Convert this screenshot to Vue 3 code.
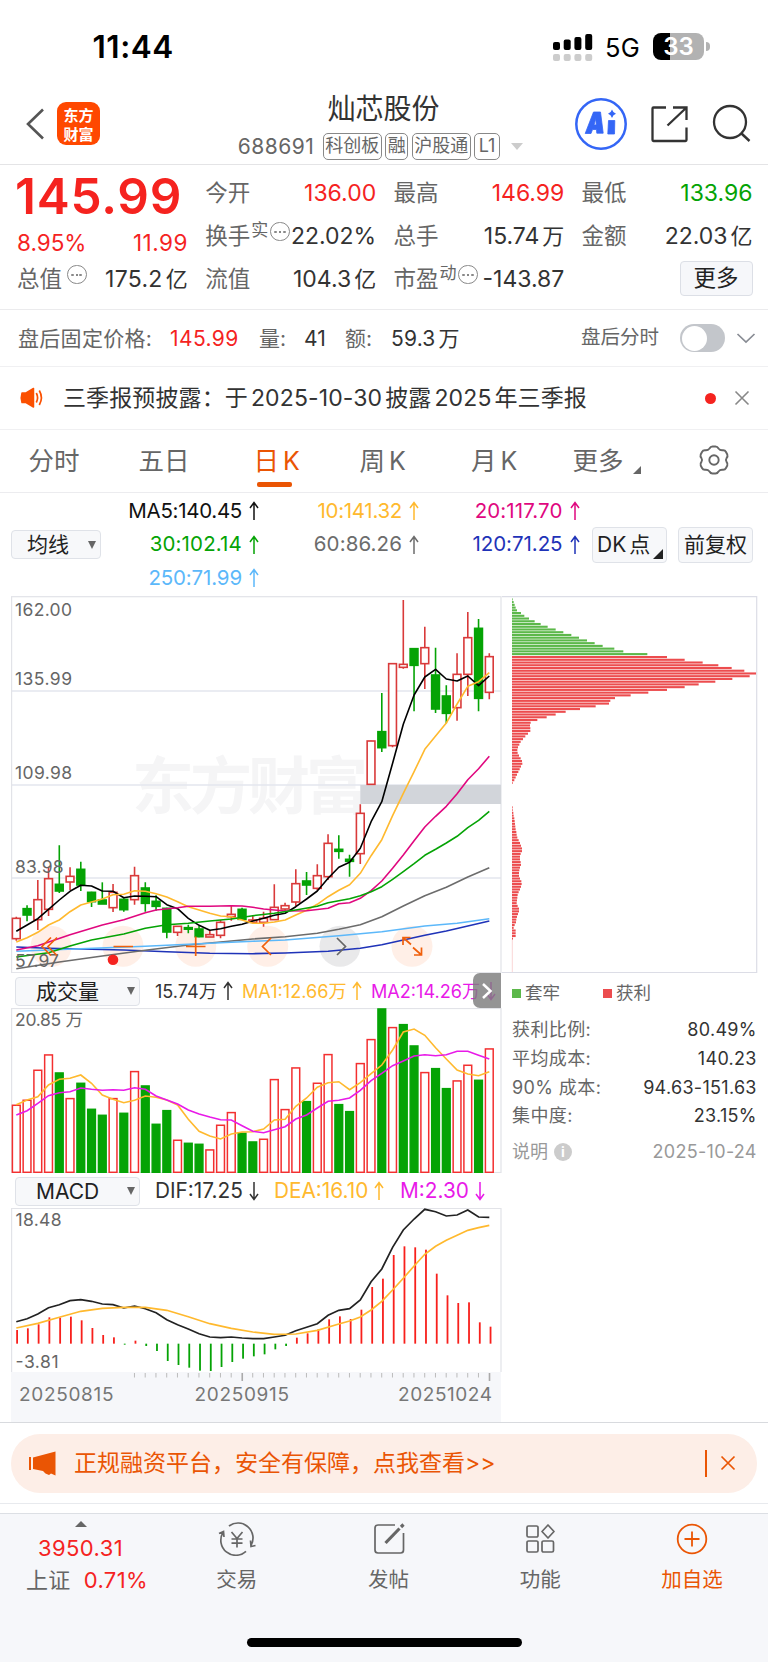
<script setup>
const step = 10.75
const cx = (i) => 16.3 + step * i

// colour, high, body top, body bottom, low (thirds of a pixel, from the top of the plot)
const candleData = [
  ['r', 980, 985, 1046, 1052], ['g', 946, 956, 975, 994], ['r', 870, 929, 989, 1020],
  ['r', 830, 866, 958, 978], ['g', 766, 883, 903, 909], ['r', 832, 859, 876, 900],
  ['g', 815, 838, 885, 903], ['g', 905, 907, 935, 951], ['g', 877, 930, 942, 942],
  ['r', 882, 907, 953, 966], ['g', 925, 928, 959, 965], ['r', 830, 857, 929, 944],
  ['g', 877, 894, 940, 965], ['g', 916, 934, 949, 962], ['g', 953, 955, 1026, 1045],
  ['r', 1008, 1009, 1027, 1038], ['g', 1004, 1013, 1017, 1030], ['g', 1008, 1017, 1040, 1042],
  ['r', 1022, 1034, 1041, 1041], ['r', 990, 997, 1036, 1045], ['r', 948, 973, 980, 992],
  ['g', 953, 958, 988, 990], ['r', 975, 990, 997, 998], ['r', 965, 985, 997, 1010],
  ['r', 883, 952, 989, 990], ['r', 938, 947, 957, 962], ['r', 838, 881, 936, 948],
  ['g', 846, 873, 885, 915], ['r', 823, 857, 895, 900], ['r', 733, 760, 860, 870],
  ['g', 736, 778, 784, 806], ['g', 794, 808, 814, 860], ['r', 643, 670, 791, 822],
  ['r', 452, 453, 583, 585], ['g', 309, 425, 473, 486], ['r', 220, 221, 467, 472],
  ['r', 30, 223, 232, 236], ['g', 176, 176, 226, 364], ['r', 110, 173, 221, 297],
  ['g', 173, 255, 357, 369], ['g', 286, 318, 370, 400], ['r', 190, 253, 353, 392],
  ['r', 66, 143, 253, 318], ['g', 87, 115, 325, 364], ['r', 190, 200, 307, 328],
]
const py = (v) => 590 + v / 3
const candles = candleData.map(([c, h, t, b, l], i) => ({
  c, x: cx(i), h: py(h), t: py(t), b: py(b), l: py(l), bh: Math.max((b - t) / 3, 1.5),
}))

const line = (pts, base) =>
  pts.map(([i, v]) => `${cx(i).toFixed(1)},${(base + v / 3).toFixed(1)}`).join(' ')
const full = (arr, base) => line(arr.map((v, i) => [i, v]), base)

const maLines = [
  { color: '#1f33b8', pts: line([[0, 1071], [3, 1075], [6, 1077], [10, 1080], [14, 1085], [18, 1090], [22, 1091], [25, 1089], [29, 1084], [32, 1075], [34, 1064], [36, 1050], [38, 1036], [40, 1023], [42, 1008], [44, 993]], 590) },
  { color: '#6c6c6c', pts: line([[0, 1136], [4, 1116], [8, 1098], [12, 1081], [16, 1065], [19, 1056], [22, 1047], [25, 1040], [28, 1030], [30, 1018], [32, 1004], [34, 980], [36, 948], [38, 917], [40, 892], [42, 861], [44, 833]], 590) },
  { color: '#5cb8fa', pts: line([[0, 1084], [6, 1076], [12, 1069], [18, 1060], [22, 1054], [25, 1050], [30, 1037], [34, 1025], [38, 1008], [41, 1000], [44, 986]], 590) },
  { color: '#000', pts: full([1024, 1005, 986, 958, 930, 904, 886, 888, 903, 904, 923, 918, 919, 920, 944, 956, 985, 1006, 1021, 1016, 1009, 1003, 993, 985, 976, 970, 950, 927, 903, 865, 832, 817, 775, 695, 635, 520, 403, 315, 261, 238, 267, 273, 258, 287, 258], 590) },
  { color: '#ffb92e', pts: full([1056, 1043, 1027, 1005, 990, 965, 945, 936, 927, 914, 913, 902, 904, 911, 921, 935, 950, 960, 970, 978, 980, 990, 1000, 1000, 996, 990, 975, 961, 943, 920, 901, 884, 850, 797, 749, 677, 610, 545, 478, 438, 399, 342, 289, 275, 248], 590) },
  { color: '#e0087f', pts: line([[0, 1080], [2, 1067], [5, 1034], [8, 1005], [10, 989], [12, 968], [13, 960], [15, 953], [16, 949], [18, 949], [20, 947], [21, 948], [22, 952], [23, 957], [25, 963], [27, 962], [29, 955], [30, 941], [31, 938], [32, 925], [33, 902], [34, 873], [35, 835], [36, 795], [37, 752], [38, 711], [39, 679], [40, 649], [41, 611], [42, 569], [43, 536], [44, 499]], 590) },
  { color: '#05a305', pts: line([[0, 1101], [3, 1088], [5, 1068], [7, 1050], [10, 1032], [12, 1015], [14, 1004], [16, 1000], [18, 993], [20, 987], [22, 977], [24, 970], [26, 960], [28, 949], [29, 938], [30, 932], [31, 926], [32, 917], [33, 905], [34, 890], [35, 868], [36, 845], [37, 821], [38, 796], [39, 778], [40, 759], [41, 739], [42, 713], [43, 691], [44, 664]], 590) },
]

const volTop = [404, 389, 299, 253, 307, 384, 338, 416, 434, 384, 428, 303, 346, 461, 420, 509, 518, 521, 538, 464, 426, 488, 514, 506, 327, 417, 292, 393, 338, 252, 402, 423, 279, 207, 115, 171, 162, 226, 306, 294, 354, 331, 284, 329, 235]
const volCol = 'rrrrgrgggrgrgggrggrrrggrrrrgrrggrrgrggrggrrgr'
const vols = volTop.map((v, i) => ({ c: volCol[i], x: cx(i), y: 970 + v / 3 }))
const volMa1 = full([404, 390, 380, 345, 328, 325, 315, 340, 375, 388, 398, 391, 378, 382, 390, 405, 448, 484, 498, 507, 492, 486, 485, 477, 450, 448, 409, 384, 352, 338, 335, 359, 338, 311, 285, 240, 186, 177, 196, 233, 267, 300, 312, 317, 305], 970)
const volMa2 = full([435, 422, 400, 377, 368, 365, 354, 358, 361, 359, 361, 353, 358, 378, 390, 402, 420, 432, 441, 449, 450, 467, 484, 488, 479, 470, 447, 435, 414, 394, 391, 384, 361, 332, 310, 287, 273, 258, 254, 257, 254, 244, 244, 256, 267], 970)

const macdEnd = [390, 385, 373, 352, 353, 350, 361, 384, 405, 412, 434, 422, 438, 453, 483, 495, 503, 512, 513, 501, 486, 476, 469, 463, 448, 438, 413, 400, 388, 358, 349, 357, 329, 261, 236, 165, 139, 142, 149, 221, 286, 309, 307, 367, 380]
const macd = macdEnd.map((v, i) => ({
  x: 17.1 + 10.76 * i, y: 1200 + Math.min(v, 431) / 3, h: Math.abs(v - 431) / 3, c: v > 431 ? 'g' : 'r',
}))
const dif = full([365, 356, 342, 323, 314, 302, 299, 304, 312, 314, 324, 318, 326, 338, 359, 374, 387, 401, 411, 413, 411, 414, 416, 416, 411, 406, 392, 382, 371, 346, 331, 326, 300, 245, 207, 142, 90, 57, 28, 35, 48, 45, 30, 51, 52], 1200)
const dea = line([[0, 384], [2, 370], [4, 352], [6, 334], [8, 325], [10, 322], [12, 322], [14, 331], [16, 350], [18, 371], [20, 385], [22, 396], [24, 403], [26, 402], [28, 391], [30, 372], [31, 363], [32, 351], [33, 330], [34, 304], [35, 270], [36, 235], [37, 198], [38, 163], [39, 139], [40, 121], [41, 106], [42, 91], [43, 83], [44, 76]], 1200)
const ticks = Array.from({ length: 34 }, (_, k) => ({ x: cx(k + 11), big: k === 10 || k === 33 }))

const trapped = [38, 41, 44, 47, 51, 63, 73, 87, 104, 122, 143, 167, 190, 214, 237, 261, 284, 308, 343, 370, 442]
const profitHigh = [501, 554, 608, 655, 695, 733, 768, 749, 697, 646, 596, 554, 501, 445, 392, 345, 331, 327, 287, 240, 197, 167, 140, 112, 92, 90, 91, 91, 84, 76, 69, 62, 58, 54, 52, 53, 57, 62, 66, 67, 63, 59, 55, 51, 47, 43, 38]
const profitLow = [38, 38, 40, 41, 43, 44, 45, 46, 47, 49, 50, 52, 56, 60, 63, 66, 66, 62, 60, 60, 62, 63, 60, 58, 57, 57, 60, 64, 65, 63, 60, 56, 53, 52, 51, 50, 53, 57, 57, 54, 51, 49, 48, 44, 41, 47, 47, 47, 39]
const chip = (arr, y0, c) => arr.map((w, i) => ({ c, y: 590 + (y0 + 8.21 * i) / 3, w: (w - 36) / 3 }))
const chips = [...chip(trapped, 28, 'g'), ...chip(profitHigh, 201, 'r'), ...chip(profitLow, 652, 'r')]

const priceLabels = [['162.00', 616.3, 57], ['135.99', 685.3, 57], ['109.98', 779.3, 57], ['83.98', 873.3, 48.5], ['57.97', 967, 44]]

const mas = [
  { t: 'MA5:140.45', c: '#111', s: -0.3 }, { t: '10:141.32', c: '#ffb92e', s: -0.3 }, { t: '20:117.70', c: '#e0087f', s: 0.1 },
  { t: '30:102.14', c: '#05a305', s: 0.15 }, { t: '60:86.26', c: '#6c6c6c', s: 0.1 }, { t: '120:71.25', c: '#1f33b8', s: -0.05 },
  { t: '250:71.99', c: '#5cb8fa', s: -0.15 },
]
const tabs = [['分时', 'a'], ['五日', 'b'], ['日', 'c', 'K'], ['周', 'd', 'K'], ['月', 'e', 'K']]
const stats = [['获利比例:', '80.49%'], ['平均成本:', '140.23'], ['90% 成本:', '94.63-151.63'], ['集中度:', '23.15%']]
const up = 'M5 19V2M1 7L5 1.6L9 7'
const down = 'M5 1V18M1 13L5 18.4L9 13'
</script>

<template>
  <div class="page">
    <header class="status">
      <span class="time">11:44</span>
      <svg class="signal" width="42" height="28" viewBox="552 31 42 28">
        <g fill="#000"><rect x="553" y="40" width="7" height="8" rx="2" /><rect x="563.7" y="37.5" width="7" height="10.5" rx="2" /><rect x="574.4" y="35" width="7" height="13" rx="2" /><rect x="585.2" y="32" width="7" height="16" rx="2" /></g>
        <g fill="#ccc"><rect x="553" y="52" width="7" height="7" rx="2" /><rect x="563.7" y="52" width="7" height="7" rx="2" /><rect x="574.4" y="52" width="7" height="7" rx="2" /><rect x="585.2" y="52" width="7" height="7" rx="2" /></g>
      </svg>
      <span class="net">5G</span>
      <div class="battery"><span>33</span></div>
      <i class="nub"></i>
    </header>

    <nav class="top">
      <svg class="back" width="20" height="34" viewBox="0 0 20 34"><path d="M18 2.5L3 17L18 31.5" fill="none" stroke="#555" stroke-width="2.6" /></svg>
      <div class="logo"><span>东方</span><span>财富</span></div>
      <div class="title">
        <h1>灿芯股份</h1>
        <div class="sub"><span class="code">688691</span><b>科创板</b><b>融</b><b>沪股通</b><b class="l1">L1</b><i></i></div>
      </div>
      <svg class="tools" width="180" height="56" viewBox="572 96 180 56" fill="none">
        <circle cx="601" cy="124" r="24.7" stroke="#3466f6" stroke-width="2.5" />
        <path fill-rule="evenodd" d="M593.500 112H600.500L603.200 133.200H596.800L596.500 129.500H592.500L591 133.500H585.200ZM594 125H596.200L595.900 118.500Z" fill="#3466f6" stroke="#3466f6" stroke-width=".8" stroke-linejoin="round" />
        <path d="M608.500 120.500H614.800L614.500 134H607.800Z" fill="#3466f6" stroke="#3466f6" stroke-width=".8" stroke-linejoin="round" />
        <path d="M612 109.500Q613 112.800 616 113.700Q613 114.700 612 118Q611 114.700 608 113.700Q611 112.800 612 109.500Z" fill="#3466f6" />
        <path d="M666 107.500H653.500Q652.500 107.500 652.500 108.500V140Q652.500 141 653.500 141H685.500Q686.500 141 686.500 140V127.500M673 107.500H686.500V120M686 108L667.500 125.500" stroke="#333" stroke-width="2.300" />
        <circle cx="730" cy="122" r="16" stroke="#333" stroke-width="2.300" />
        <path d="M741.500 133.500L749.500 141" stroke="#333" stroke-width="2.400" />
      </svg>
    </nav>

    <section class="quote">
      <div class="price"><strong>145.99</strong><div><span>8.95%</span><span class="chg">11.99</span></div></div>
      <div class="cell c2"><label>今开</label><span class="red">136.00</span></div>
      <div class="cell c3"><label>最高</label><span class="red">146.99</span></div>
      <div class="cell c4"><label>最低</label><span class="green">133.96</span></div>
      <div class="cell c2"><label>换手<sup>实</sup></label><i class="dots"></i><span>22.02%</span></div>
      <div class="cell c3"><label>总手</label><span>15.74<em>万</em></span></div>
      <div class="cell c4"><label>金额</label><span>22.03<em>亿</em></span></div>
      <div class="cell c1"><label>总值</label><i class="dots near"></i><span>175.2<em>亿</em></span></div>
      <div class="cell c2"><label>流值</label><span>104.3<em>亿</em></span></div>
      <div class="cell c3"><label>市盈<sup>动</sup></label><i class="dots"></i><span>-143.87</span></div>
      <div class="cell c4"><button class="more">更多</button></div>
    </section>

    <section class="after">
      <span class="g a1">盘后固定价格:</span><span class="red a2">145.99</span>
      <span class="g a3">量:</span><span class="a4">41</span><span class="g a5">额:</span><span class="a6">59.3<em>万</em></span>
      <span class="g a7">盘后分时</span><div class="toggle"></div>
      <svg class="chev" width="20" height="12" viewBox="0 0 20 12"><path d="M1.500 2L10 10L18.500 2" fill="none" stroke="#888c94" stroke-width="1.700" /></svg>
    </section>

    <section class="notice">
      <svg width="26" height="28" viewBox="19 384 26 28" fill="none"><path d="M22 393H26L33.500 388.500V407L26 402.500H22Q20.500 397.700 22 393Z" fill="#fb5000" stroke="#fb5000" stroke-width="1.500" stroke-linejoin="round" /><path d="M36.300 393Q38.800 397.700 36.300 402.500M39.300 390.500Q43.500 397.700 39.300 405" stroke="#fb5000" stroke-width="1.700" /></svg>
      <p>三季报预披露：于<em>2025-10-30</em>披露<em>2025</em>年三季报</p>
      <i class="reddot"></i>
      <svg class="close" width="16" height="16" viewBox="0 0 16 16"><path d="M1.500 1.500L14.500 14.500M14.500 1.500L1.500 14.500" stroke="#888" stroke-width="1.600" /></svg>
    </section>

    <section class="tabs">
      <span v-for="t in tabs" :key="t[0]" :class="['t' + t[1], { on: t[1] === 'c' }]">{{ t[0] }}<em v-if="t[2]">{{ t[2] }}</em></span>
      <span class="tf">更多</span><i class="tri"></i>
      <svg width="32" height="32" viewBox="-16 -16 32 32" fill="none" stroke="#666" stroke-width="1.900" stroke-linejoin="round"><path d="M-4.500 -11.500Q-3.500 -13.500 -1.500 -13.500H1.500Q3.500 -13.500 4.500 -11.500Q6 -9.500 8.500 -9.700Q11 -10 12 -8L13.300 -5.500Q14 -3.500 12.600 -2Q11.300 0 12.600 2Q14 3.500 13.300 5.500L12 8Q11 10 8.500 9.700Q6 9.500 4.500 11.500Q3.500 13.500 1.500 13.500H-1.500Q-3.500 13.500 -4.500 11.500Q-6 9.500 -8.500 9.700Q-11 10 -12 8L-13.300 5.500Q-14 3.500 -12.600 2Q-11.300 0 -12.600 -2Q-14 -3.500 -13.300 -5.500L-12 -8Q-11 -10 -8.500 -9.700Q-6 -9.500 -4.500 -11.500Z" /><circle r="4.700" /></svg>
    </section>

    <section class="mas">
      <button class="select s1">均线<i></i></button>
      <div class="malist">
        <span v-for="m in mas" :key="m.t" :style="{ color: m.c, letterSpacing: m.s + 'px' }">{{ m.t }}<svg width="10" height="20" viewBox="0 0 10 20"><path :d="up" /></svg></span>
      </div>
      <button class="opt dk">DK<em>点</em><i></i></button>
      <button class="opt">前复权</button>
    </section>

    <section class="charts">
      <div class="left">
        <svg class="plot" width="502" height="377" viewBox="0 596 502 377">
          <text class="mark" x="132" y="809" textLength="236">东方财富</text>
          <g stroke="#e3e6ee" stroke-width="1.300"><path d="M11.500 691H501M11.500 785H501M11.500 878H501" /></g>
          <rect x="11.600" y="596.700" width="489.400" height="376" fill="none" stroke="#e2e3e8" stroke-width="1.200" />
          <rect x="360.300" y="785" width="140.700" height="19" fill="#d2d5da" />
          <g fill="#fe6a24" fill-opacity=".11"><circle cx="51" cy="946.300" r="20.500" /><circle cx="123" cy="946.300" r="20.500" /><circle cx="195.700" cy="946.300" r="20.500" /><circle cx="267.700" cy="946.300" r="20.500" /><circle cx="412" cy="946.300" r="20.500" /></g>
          <circle cx="340" cy="946.300" r="20.500" fill="#e9e9ea" />
          <g v-for="(k, i) in candles" :key="i" :class="k.c">
            <path :d="`M${k.x} ${k.h}V${k.t}M${k.x} ${k.b}V${k.l}`" />
            <rect :x="k.x - 3.900" :y="k.t" width="7.800" :height="k.bh" />
          </g>
          <polyline v-for="(m, i) in maLines" :key="'m' + i" :points="m.pts" fill="none" :stroke="m.color" stroke-width="1.600" stroke-linejoin="round" />
          <text v-for="p in priceLabels" :key="p[0]" class="lab" x="15" :y="p[1]" :textLength="p[2]">{{ p[0] }}</text>
          <g fill="none" stroke="#f0600c" stroke-width="1.700">
            <path d="M51 937.500L42 946.500L51 955.500M57 937.500L48 946.500L57 955.500" />
            <path d="M113.500 946.500H133M186 946.500H205.500M195.700 936.500V956" />
            <path d="M271 938L262.500 946.500L271 955" />
            <path d="M403 945V937.500H410.500M403 937.500L411 944.500M421.500 947.500V955H414M421.500 955L413 947.500" />
          </g>
          <path d="M337 938L345.500 946.500L337 955" fill="none" stroke="#666" stroke-width="1.700" />
          <circle cx="113" cy="959.700" r="5.300" fill="#f5231f" />
        </svg>

        <div class="bar">
          <button class="select s2">成交量<i></i></button>
          <span class="v1">15.74万<svg width="10" height="20" viewBox="0 0 10 20"><path :d="up" /></svg></span>
          <span class="v2">MA1:12.66万<svg width="10" height="20" viewBox="0 0 10 20"><path :d="up" /></svg></span>
          <span class="v3">MA2:14.26万<svg width="10" height="20" viewBox="0 0 10 20"><path :d="down" /></svg></span>
          <div class="next"><svg width="12" height="18" viewBox="0 0 12 18"><path d="M2 2L9.500 9L2 16" fill="none" stroke="#fff" stroke-width="2.500" /></svg></div>
        </div>

        <svg class="plot" width="502" height="165" viewBox="0 1008 502 165">
          <rect x="11.600" y="1008.500" width="489.400" height="164" fill="none" stroke="#e2e3e8" stroke-width="1.200" />
          <g v-for="(v, i) in vols" :key="i" :class="'v' + v.c">
            <rect :x="v.x - 3.900" :y="v.y + .6" width="7.800" :height="1171.700 - v.y" />
          </g>
          <polyline :points="volMa1" fill="none" stroke="#ffb92e" stroke-width="1.600" />
          <polyline :points="volMa2" fill="none" stroke="#e81ae8" stroke-width="1.600" />
          <text class="lab" x="15" y="1025.500" textLength="68">20.85 万</text>
        </svg>

        <div class="bar b2">
          <button class="select s2">MACD<i></i></button>
          <span class="v1 w1">DIF:17.25<svg width="10" height="20" viewBox="0 0 10 20"><path :d="down" /></svg></span>
          <span class="v2 w2">DEA:16.10<svg width="10" height="20" viewBox="0 0 10 20"><path :d="up" /></svg></span>
          <span class="v3 w3">M:2.30<svg width="10" height="20" viewBox="0 0 10 20"><path :d="down" /></svg></span>
        </div>

        <svg class="plot" width="502" height="214" viewBox="0 1208 502 214">
          <path d="M11.600 1372V1208.500H501V1372" fill="none" stroke="#e2e3e8" stroke-width="1.200" />
          <rect x="11" y="1372" width="490" height="50" fill="#f6f7fa" />
          <rect v-for="(m, i) in macd" :key="i" :x="m.x - .9" :y="m.y" width="1.800" :height="m.h" :fill="m.c === 'r' ? '#f8201c' : '#05a305'" />
          <polyline :points="dif" fill="none" stroke="#222" stroke-width="1.700" />
          <polyline :points="dea" fill="none" stroke="#ffb92e" stroke-width="1.700" />
          <rect v-for="(t, i) in ticks" :key="'t' + i" :x="t.x - .6" y="1373" :width="t.big ? 1.600 : 1" :height="t.big ? 8 : 4.500" :fill="t.big ? '#aaa' : '#bbb'" />
          <text class="lab" x="15.500" y="1225.500" textLength="46">18.48</text>
          <text class="lab" x="15.500" y="1367.500" textLength="43">-3.81</text>
          <g class="date"><text x="19" y="1400.500" textLength="94.500">20250815</text><text x="194.500" y="1400.500" textLength="94.500">20250915</text><text x="398" y="1400.500" textLength="94">20251024</text></g>
        </svg>
      </div>

      <div class="right">
        <svg class="plot" width="266" height="377" viewBox="502 596 266 377">
          <path d="M502 596.700H756.700V972.500H502" fill="none" stroke="#dcdde6" stroke-width="1.200" />
          <rect v-for="(c, i) in chips" :key="i" x="512" :y="c.y - 1" :width="c.w" height="2.100" :fill="c.c === 'r' ? '#ec4c4e' : '#5cb84a'" />
          <path d="M512.300 939V972" stroke="#f7b8b8" stroke-width=".6" />
        </svg>
        <div class="legend"><i class="sq"></i>套牢<i class="sq rd"></i>获利</div>
        <div v-for="s in stats" :key="s[0]" class="stat"><span>{{ s[0] }}</span><b>{{ s[1] }}</b></div>
        <div class="stat note"><span>说明<i>i</i></span><b>2025-10-24</b></div>
      </div>
    </section>

    <section class="promo">
      <div class="pill">
        <svg width="30" height="26" viewBox="28 1450 30 26"><path d="M29 1457H31V1470H29ZM33 1457.500L55.500 1451.500V1475.500L51 1473.500L49 1475L45.500 1473.500L43 1471L33 1469Z" fill="#ea5504" /></svg>
        <p>正规融资平台，安全有保障，点我查看&gt;&gt;</p>
        <i></i>
        <svg class="px" width="16" height="16" viewBox="0 0 16 16"><path d="M1.500 1.500L14.500 14.500M14.500 1.500L1.500 14.500" stroke="#ea5504" stroke-width="1.700" /></svg>
      </div>
    </section>
    <div class="gap"></div>

    <footer class="foot">
      <div class="items">
        <div class="index"><i></i><span>3950.31</span><p>上证<em>0.71%</em></p></div>
        <div class="item"><svg width="40" height="34" viewBox="-20 -17 40 34" fill="none" stroke="#666" stroke-width="1.700"><path d="M-8 -13A15 15 0 0 1 14 6.500M13.500 1.500L14 7.500L18.500 6.500M9 12.300A15 15 0 0 1 -14 -6.500M-18 -5.500L-13.500 -7.500L-13 -2M-5.500 -7L0 -.500L5.500 -7M0 -.500V8.500M-5.500 0H5.500M-5.500 4.200H5.500" /></svg><span>交易</span></div>
        <div class="item"><svg width="40" height="34" viewBox="-20 -17 40 34" fill="none" stroke="#666" stroke-width="1.700"><path d="M6 -14H-11Q-14 -14 -14 -11V11Q-14 14 -11 14H11.500Q14.500 14 14.500 11V-6" /><path d="M-3.500 4L10.500 -10.500" stroke-width="3.200" /><path d="M12 -12L14.500 -14.500" stroke-width="3.200" /></svg><span>发帖</span></div>
        <div class="item"><svg width="40" height="34" viewBox="-20 -17 40 34" fill="none" stroke="#666" stroke-width="1.700"><rect x="-13" y="-13" width="11" height="11" rx="1.500" /><rect x="-13" y="2" width="11" height="11" rx="1.500" /><rect x="2" y="2" width="11.500" height="11" rx="1.500" /><path d="M8 -14L14 -7.500L8 -1L2 -7.500Z" stroke-linejoin="round" /></svg><span>功能</span></div>
        <div class="item on"><svg width="40" height="34" viewBox="-20 -17 40 34" fill="none" stroke="#ea5504" stroke-width="1.800"><circle r="14.300" /><path d="M-7.500 0H7.500M0 -7.500V7.500" /></svg><span>加自选</span></div>
      </div>
      <div class="home"></div>
    </footer>
  </div>
</template>

<style>
body { margin: 0; background: #fff; }
</style>

<style scoped>
.page { width: 768px; height: 1662px; overflow: hidden; background: #fff; color: #333; font-family: Inter, "Noto Sans CJK SC", sans-serif; line-height: 1; font-size: 22px; }
.page * { box-sizing: border-box; }
em, i, b { font-style: normal; font-weight: 400; }
h1, p { margin: 0; font-weight: 400; white-space: nowrap; }
span { white-space: nowrap; }
svg { display: block; flex: none; }
.red { color: #f5231f; }
.green { color: #05a305; }

.status { height: 88px; display: flex; align-items: center; padding: 5px 0 0 92.500px; color: #000; }
.time { width: 459.500px; font-size: 31.500px; font-weight: 600; letter-spacing: .5px; }
.net { width: 48px; margin-left: 11px; font-size: 25.500px; letter-spacing: .2px; padding-top: 3px; }
.battery { width: 51px; height: 27px; border-radius: 8px; background: linear-gradient(90deg, #000 17px, #b2b2b2 17px); color: #fff; font-size: 24px; font-weight: 600; display: flex; align-items: center; justify-content: center; }
.nub { width: 3.500px; height: 9px; margin-left: 2px; border-radius: 0 4px 4px 0; background: #b2b2b2; }

.top { height: 77px; display: flex; border-bottom: 1.500px solid #e4e4e6; }
.back { margin: 19px 0 0 25px; }
.logo { width: 43px; height: 43px; margin: 14px 0 0 12px; border-radius: 9px; background: #ff4800; color: #fff; font-family: "Noto Sans CJK SC", sans-serif; font-size: 15px; font-weight: 700; display: flex; flex-direction: column; align-items: center; justify-content: center; gap: 4px; flex: none; }
.logo span { line-height: 15px; }
.title { width: 472px; height: 76px; flex: none; display: flex; flex-direction: column; align-items: center; padding-left: 95px; }
.title h1 { font-size: 28px; line-height: 43px; }
.sub { display: flex; align-items: center; height: 28px; margin: 1px 0 0 -6px; color: #666; }
.code { font-size: 21px; margin-right: 6px; width: 79px; letter-spacing: .5px; }
.sub b { height: 27px; border: 1.500px solid #888; border-radius: 5px; font-size: 18px; display: flex; align-items: center; padding: 0 1.500px; margin-right: 3.500px; flex: none; }
.sub .l1 { padding: 0 3.500px; }
.sub i { margin-left: 8px; border: 6.500px solid transparent; border-top: 7px solid #ccc; border-bottom: 0; }
.tools { margin-top: 8px; }

.quote { height: 145px; border-bottom: 1.500px solid #ebebed; padding: 6.500px 16px 0 17px; display: grid; grid-template-columns: repeat(4, 171px); column-gap: 17.200px; grid-template-rows: repeat(3, 43px); font-size: 23px; }
.price { grid-row: span 2; color: #f5231f; }
.price strong { display: block; font-size: 49.500px; font-weight: 600; line-height: 48px; margin-left: -2px; letter-spacing: .8px; }
.price div { display: flex; justify-content: space-between; font-size: 22.500px; line-height: 45px; }
.chg { letter-spacing: .5px; }
.cell { display: flex; align-items: center; }
.cell label { font-size: 22.500px; color: #666; position: relative; }
.cell label sup { font-size: 17px; vertical-align: 8px; line-height: 0; margin-left: 1px; }
.cell > span { margin-left: auto; }
.cell em { margin-left: 3px; font-size: 22px; }
.c1 span { letter-spacing: .3px; }
.dots { width: 19.500px; height: 19.500px; border: 1.300px solid #888; border-radius: 50%; margin: -9px 0 0 2px; background: radial-gradient(circle, #888 1px, transparent 1.500px) 50% 50% / 4px 16px no-repeat, radial-gradient(circle, #888 1px, transparent 1.500px) 10% 50% / 7px 16px no-repeat, radial-gradient(circle, #888 1px, transparent 1.500px) 90% 50% / 7px 16px no-repeat; flex: none; }
.dots.near { margin-left: 5px; }
.more { margin: -2px 0 0 auto; width: 73px; height: 35px; border: 1.500px solid #dcdfe6; border-radius: 4px; background: #f6f7fa; color: #222; font: 22.500px Inter, "Noto Sans CJK SC", sans-serif; padding: 0; line-height: 1; }

.after { height: 57px; display: flex; align-items: center; border-bottom: 1px solid #f0f0f2; padding-left: 18px; font-size: 21px; }
.after .g { color: #666; }
.a1 { width: 152px; letter-spacing: .3px; }
.a2 { width: 89px; letter-spacing: .4px; } .a3 { width: 45px; } .a4 { width: 41px; } .a5 { width: 46px; } .a6 { width: 190px; letter-spacing: .2px; }
.a6 em { margin-left: 3px; }
.a7 { font-size: 19.500px; width: 99px; }
.toggle { width: 45px; height: 28px; border-radius: 14px; background: #c3c6cb; flex: none; display: flex; }
.toggle::before { content: ""; width: 25px; height: 25px; margin: 1.500px; border-radius: 50%; background: #fff; }
.chev { margin-left: 11px; }

.notice { height: 63px; display: flex; align-items: center; border-bottom: 1px solid #f0f0f2; padding-left: 19px; }
.notice p { font-size: 23px; margin-left: 18px; width: 642px; letter-spacing: .12px; }
.notice em { margin: 0 3px; }
.reddot { width: 11px; height: 11px; border-radius: 50%; background: #f5231f; flex: none; }
.close { margin-left: 18px; }

.tabs { height: 63px; display: flex; align-items: center; border-bottom: 1px solid #ececef; padding-left: 28.500px; font-size: 25.500px; color: #666; }
.ta { width: 110px; } .tb { width: 115px; } .tc { width: 106px; } .td { width: 111.500px; } .te { width: 101.500px; } .tf { width: 59px; }
.tabs em { margin-left: 4px; font-size: 25px; }
.tabs span { height: 62px; line-height: 62px; }
.on { color: #ea5504; position: relative; }
.tabs .on::after { content: ""; position: absolute; left: 3px; bottom: 5px; width: 35px; height: 5.500px; border-radius: 2px; background: #ea5504; }
.tri { margin: 17px 57px 0 1px; border-left: 8px solid transparent; border-bottom: 8px solid #666; }
.tabs svg { margin-top: -2px; }

.mas { height: 103px; display: flex; align-items: center; padding-left: 11px; }
button { font-family: Inter, "Noto Sans CJK SC", sans-serif; line-height: 1; color: #222; padding: 0; flex: none; }
.select { height: 29px; border: 1.500px solid #dfe2e8; border-radius: 4px; background: #f7f8fa; display: flex; align-items: center; font-size: 21px; }
.select i { margin-left: auto; margin-right: 4px; border: 4.300px solid transparent; border-top: 8px solid #666; border-bottom: 0; }
.s1 { width: 90px; padding-left: 15px; }
.s2 { width: 125px; padding-left: 20px; margin-left: 15px; }
.malist { width: 478px; flex: none; display: grid; grid-template-columns: 158px 160px 160.500px; grid-template-rows: repeat(3, 33.500px); font-size: 20.500px; }
.malist span { display: flex; align-items: center; justify-content: flex-end; }
span > svg { margin-left: 7px; fill: none; stroke: currentColor; stroke-width: 1.500; }
.opt { width: 75px; height: 36px; border: 1.500px solid #dfe2e8; border-radius: 4px; background: #f7f8fa; font-size: 21px; margin-left: 13px; margin-right: -2px; position: relative; white-space: nowrap; }
.opt.dk { text-align: left; padding-left: 4px; }
.opt em { margin-left: 3px; }
.opt i { position: absolute; right: 3px; bottom: 3px; border-left: 10px solid transparent; border-bottom: 10px solid #222; }

.charts { height: 826px; display: flex; }
.left { width: 502px; }
.mark { font: 700 62px "Noto Sans CJK SC", sans-serif; fill: #f5f5f6; }
.lab { font-size: 17.500px; fill: #666; }
.date text { font-size: 19px; fill: #777; }
.r { stroke: #d93a3a; stroke-width: 1.600; fill: #fff; }
.g { stroke: #05a305; stroke-width: 1.600; fill: #05a305; }
.after .g { stroke: none; }
.vr { stroke: #f33030; stroke-width: 1.500; fill: #fff; }
.vg { stroke: #05a305; stroke-width: 1.400; fill: #05a305; }
.bar { height: 35px; display: flex; align-items: center; font-size: 18.100px; position: relative; padding-top: 1px; }
.bar span { display: flex; align-items: center; }
.bar span svg { margin-left: 6px; }
.v1 { margin-left: 15px; width: 87px; color: #333; }
.v2 { width: 129px; color: #ffb92e; }
.v3 { color: #e81ae8; }
.w1 { width: 119px; } .w2 { width: 126px; }
.b2 { font-size: 20.800px; }
.b2 .select { font-size: 21px; }
.b2 .v1 { width: 119px; } .b2 .v2 { width: 126px; }
.next { position: absolute; right: 1px; top: 0; width: 28px; height: 35px; border-radius: 7px 0 0 7px; background: rgba(125, 125, 125, .82); display: flex; align-items: center; justify-content: center; }

.right { width: 266px; }
.legend { height: 40px; display: flex; align-items: center; padding-left: 10px; font-size: 17.500px; color: #666; }
.sq { width: 9px; height: 9px; background: #5cb84a; margin-right: 4px; }
.rd { background: #ec4c4e; margin-left: 43px; }
.stat { height: 28.700px; display: flex; align-items: center; justify-content: space-between; padding: 6px 11.500px 0 10px; font-size: 18px; color: #666; }
.stat span { letter-spacing: .4px; }
.stat b { color: #333; letter-spacing: .3px; margin-right: -.3px; }
.stat.note { height: 42px; color: #999; }
.stat.note span { letter-spacing: 0; }
.stat.note b { color: #999; }
.note span { display: flex; align-items: center; }
.note i { width: 18px; height: 18px; border-radius: 50%; background: #ccc; color: #fff; font-size: 14px; font-weight: 700; display: flex; align-items: center; justify-content: center; margin-left: 6px; }

.promo { height: 82px; border-top: 1.500px solid #d8dade; border-bottom: 1.500px solid #e8eaee; padding: 11px 11px 0; }
.pill { height: 58.500px; border-radius: 29px; background: #fdeee7; display: flex; align-items: center; padding-left: 17px; color: #ea5504; }
.pill p { font-size: 23px; margin-left: 16px; width: 631px; }
.pill i { width: 1.500px; height: 27px; background: #ea5504; }
.px { margin-left: 13px; }
.gap { height: 9px; }
.foot { height: 149px; background: #f6f7fa; border-top: 1.500px solid #dcdfe4; }
.items { height: 124px; display: flex; }
.index { width: 161px; display: flex; flex-direction: column; align-items: center; color: #f5231f; }
.index i { margin-top: 7px; border: 6.500px solid transparent; border-bottom: 6.500px solid #666; border-top: 0; }
.index span { font-size: 22px; margin-top: 10px; letter-spacing: .4px; }
.index p { font-size: 22px; margin: 10px 0 0 13px; color: #666; letter-spacing: .4px; }
.index em { color: #f5231f; margin-left: 13px; font-size: 22px; }
.item { width: 151.700px; display: flex; flex-direction: column; align-items: center; color: #666; font-size: 20.500px; }
.item svg { margin: 8px 0 13.500px; }
.item.on { color: #ea5504; }
.home { width: 275px; height: 9px; border-radius: 5px; background: #000; margin: 0 auto; }
</style>
